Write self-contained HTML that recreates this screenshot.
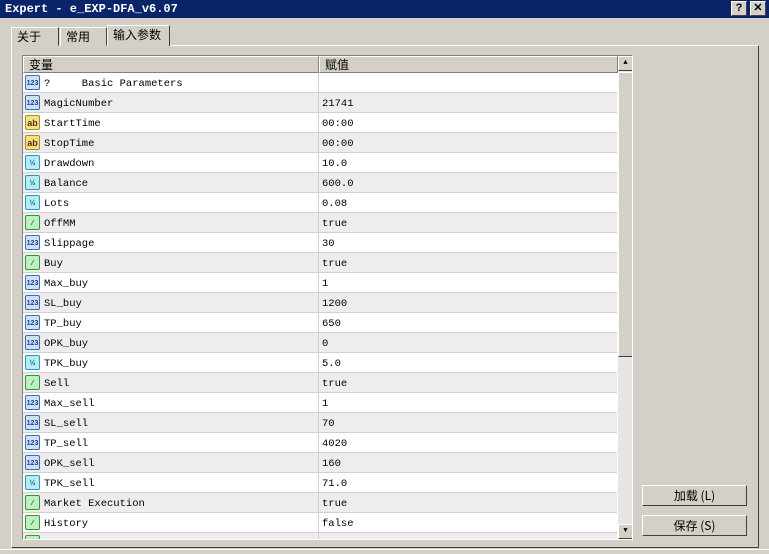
<!DOCTYPE html><html><head><meta charset="utf-8"><style>
*{margin:0;padding:0;box-sizing:border-box}
body{width:769px;height:554px;background:#d4d0c8;position:relative;overflow:hidden;font-family:"Liberation Mono","Noto Sans CJK SC",monospace;font-size:10.5px}
.t{position:absolute;left:0;top:0;width:769px;height:18px;background:#0a246a;color:#fff;font-weight:bold;font-size:12px;line-height:18px;padding-left:5px}
.b{position:absolute;top:1px;width:16px;height:15px;background:#d4d0c8;border:1px solid;border-color:#fff #404040 #404040 #fff;color:#000;font:bold 11px/13px "Liberation Sans",sans-serif;text-align:center}
.tab{position:absolute;top:27px;height:19px;border:1px solid;border-color:#fff #404040 transparent #fff;font:12px/17px "Noto Sans CJK SC",sans-serif;padding-left:5px;background:#d4d0c8}
.page{position:absolute;left:11px;top:45px;width:748px;height:503px;border:1px solid;border-color:#fff #404040 #404040 #fff}
.list{position:absolute;left:22px;top:55px;width:611px;height:485px;border:1px solid;border-color:#808080 #fff #fff #808080;background:#fff;overflow:hidden}
.hd{position:absolute;top:0;height:17px;background:#d4d0c8;border:1px solid;border-color:#fff #808080 #808080 #fff;font:12px/15px "Noto Sans CJK SC",sans-serif;padding-left:5px}
.r{position:absolute;left:0;width:594px;height:20px;border-bottom:1px solid #d0d0d0;line-height:22px}
.r.g{background:#efecef}
.r .n{position:absolute;left:21px}
.r .v{position:absolute;left:299px}
.r .d{position:absolute;left:295px;top:0;width:1px;height:20px;background:#d0d0d0}
.ic{position:absolute;left:2px;top:2px;width:15px;height:15px;border-radius:2px;font:bold 7px/15px "Liberation Sans",sans-serif;text-align:center}
.i1{background:#cfe0f5;border:1px solid #3a6fb5;color:#1a3f8f}
.i2{background:#f5e08a;border:1px solid #b08a20;color:#503000;font-size:9px}
.i3{background:#b8ecf5;border:1px solid #2a9ab5;color:#0a5f80}
.i4{background:#bfeec0;border:1px solid #2e9a35;color:#0a5a10}
.sb{position:absolute;left:595px;top:0;width:15px;height:483px;background:#e8e6e2}
.sbb{position:absolute;left:0;width:15px;height:15px;background:#d4d0c8;border:1px solid;border-color:#fff #404040 #404040 #fff;font-size:7px;text-align:center;line-height:13px}
.th{position:absolute;left:0;top:16px;width:15px;height:285px;background:#d4d0c8;border:1px solid;border-color:#fff #404040 #404040 #fff}
.btn{position:absolute;left:642px;width:105px;height:21px;border:1px solid;border-color:#fff #404040 #404040 #fff;text-align:center;font:12px/19px "Noto Sans CJK SC",sans-serif}
</style></head><body>
<div class="t">Expert - e_EXP-DFA_v6.07</div>
<div class="b" style="left:731px">?</div><div class="b" style="left:750px">✕</div>
<div class="page"></div>
<div class="tab" style="left:11px;width:48px">关于</div>
<div class="tab" style="left:60px;width:47px">常用</div>
<div class="tab" style="left:107px;top:25px;height:21px;width:63px;border-bottom:none;z-index:2">输入参数</div>
<div class="list">
<div class="hd" style="left:0;width:296px">变量</div>
<div class="hd" style="left:296px;width:299px">赋值</div>
<div id="rows"></div>
<div class="sb"><div class="sbb" style="top:0">▲</div><div class="th"></div><div class="sbb" style="top:468px">▼</div></div>
</div>
<div class="btn" style="top:485px">加载 (L)</div>
<div class="btn" style="top:515px">保存 (S)</div>
<div style="position:absolute;left:0;top:549px;width:769px;height:5px;border-top:1px solid #fff;background:#d4d0c8"></div>
<script>
var d=[["1","?&nbsp;&nbsp;&nbsp;&nbsp;&nbsp;Basic Parameters",""],["1","MagicNumber","21741"],["2","StartTime","00:00"],["2","StopTime","00:00"],["3","Drawdown","10.0"],["3","Balance","600.0"],["3","Lots","0.08"],["4","OffMM","true"],["1","Slippage","30"],["4","Buy","true"],["1","Max_buy","1"],["1","SL_buy","1200"],["1","TP_buy","650"],["1","OPK_buy","0"],["3","TPK_buy","5.0"],["4","Sell","true"],["1","Max_sell","1"],["1","SL_sell","70"],["1","TP_sell","4020"],["1","OPK_sell","160"],["3","TPK_sell","71.0"],["4","Market Execution","true"],["4","History","false"],["4","",""]];
var t={"1":"123","2":"ab","3":"½","4":"⁄"},h="";
d.forEach(function(r,i){h+='<div class="r'+(i%2?' g':'')+'" style="top:'+(17+20*i)+'px"><span class="ic i'+r[0]+'">'+t[r[0]]+'</span><span class="n">'+r[1]+'</span><span class="d"></span><span class="v">'+r[2]+'</span></div>'});
document.getElementById("rows").innerHTML=h;
</script>
</body></html>
